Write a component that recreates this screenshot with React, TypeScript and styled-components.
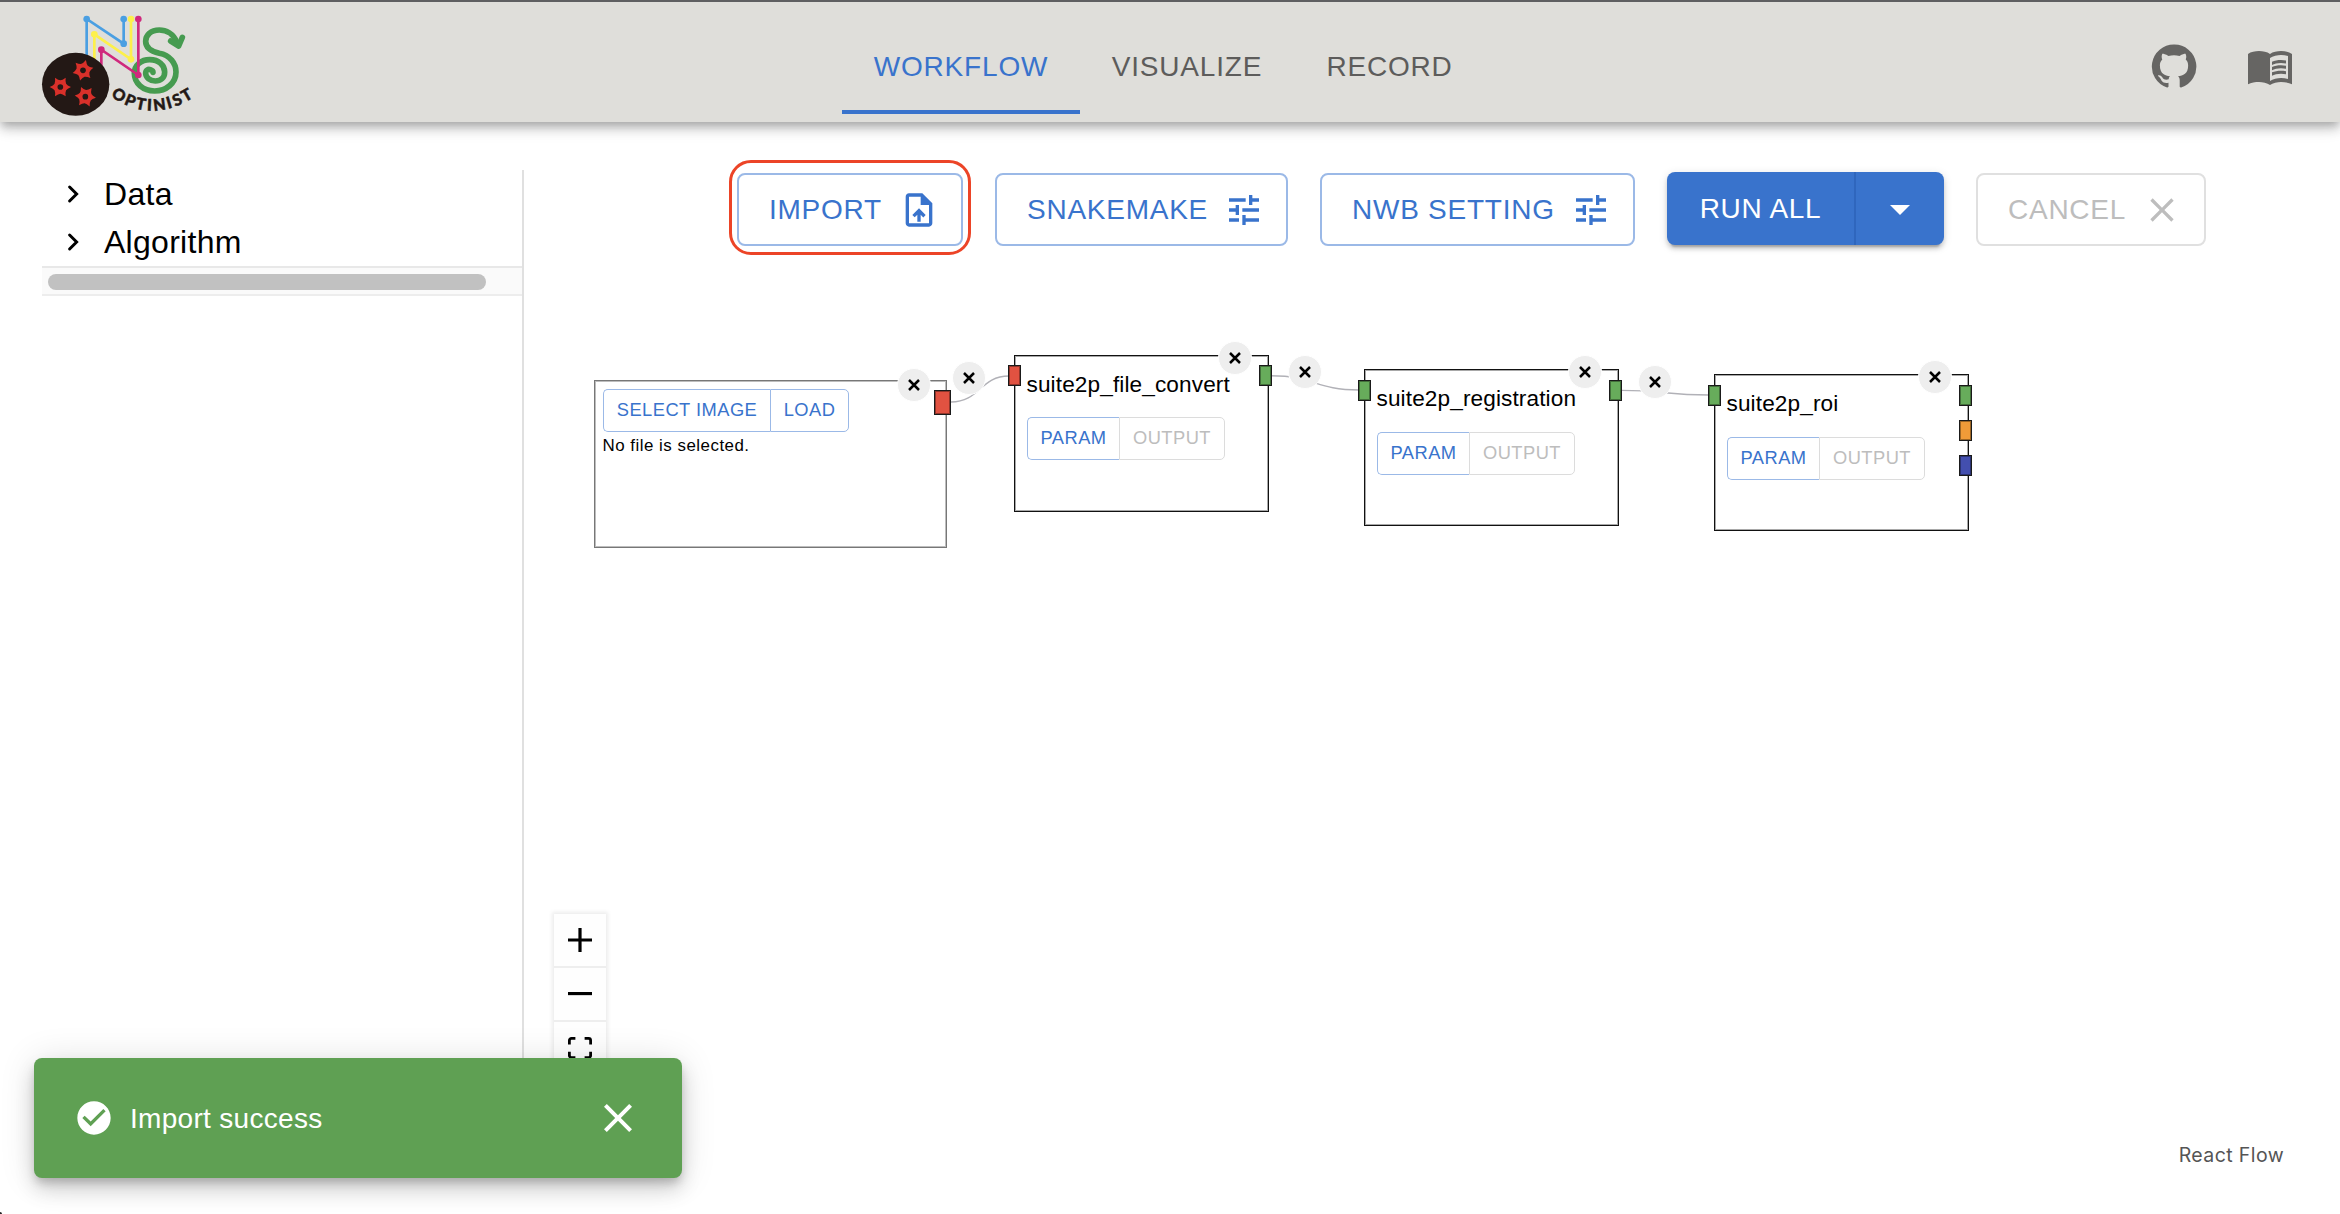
import React from "react";
import styled, { createGlobalStyle, css } from "styled-components";

const PRIMARY = "#3973cc";
const PRIMARY_BORDER = "#9bb9e7";
const DISABLED = "#bdbdbd";
const DISABLED_BORDER = "#e0e0e0";

const GlobalStyle = createGlobalStyle`
  * { box-sizing: border-box; }
  html, body { margin: 0; padding: 0; background: #fff; }
  body {
    font-family: "Liberation Sans", Arial, Helvetica, sans-serif;
    color: #000;
    overflow: hidden;
  }
  button { font-family: inherit; margin: 0; cursor: pointer; }
  svg { display: block; flex: none; }
`;

const Page = styled.div`
  position: relative;
  display: flex;
  flex-direction: column;
  width: 2340px;
  height: 1214px;
  overflow: hidden;
`;

/* ---------- Header ---------- */

const Header = styled.header`
  display: flex;
  align-items: flex-start;
  height: 122px;
  flex: none;
  padding: 0 46px 0 40px;
  background: #dfdeda;
  border-top: 2px solid #5f5f61;
  z-index: 1;
  box-shadow: 0 4px 8px -2px rgba(0, 0, 0, 0.2), 0 8px 10px rgba(0, 0, 0, 0.14),
    0 2px 20px rgba(0, 0, 0, 0.12);
`;

const LogoSvg = styled.svg`
  width: 160px;
  height: 104px;
  margin-top: 12px;
`;

const LogoText = styled.text`
  font-family: Lato, sans-serif;
  font-weight: 900;
  font-size: 48px;
  fill: #231815;
  stroke: #231815;
  stroke-width: 1.5;
`;

const Tabs = styled.nav`
  display: flex;
  margin: 16px 0 0 642px;
  height: 96px;
`;

const Tab = styled.button<{ $width: number; $active?: boolean }>`
  width: ${(p) => p.$width}px;
  padding: 2px 0 0;
  background: none;
  border: 0;
  font-size: 28px;
  letter-spacing: 0.8px;
  color: ${(p) => (p.$active ? PRIMARY : "#5d5c5b")};
  ${(p) => p.$active && css`
    box-shadow: inset 0 -4px 0 ${PRIMARY};
  `}
`;

const HeaderIcons = styled.div`
  display: flex;
  gap: 48px;
  margin: 40px 0 0 auto;
  color: #666563;
`;

/* ---------- Body ---------- */

const Body = styled.div`
  display: flex;
  flex: 1;
  padding: 48px 0 0 42px;
`;

const Sidebar = styled.aside`
  width: 482px;
  height: 1000px;
  flex: none;
  border-right: 2px solid #e0e0e0;
`;

const TreeRow = styled.div`
  display: flex;
  align-items: center;
  height: 48px;
  padding-left: 22px;
  gap: 22px;
  font-size: 32px;
  line-height: 48px;
  letter-spacing: 0.28px;
`;

const ScrollTrack = styled.div`
  height: 30px;
  padding: 6px;
  background: #fafafa;
  border-top: 2px solid #e8e8e8;
  border-bottom: 2px solid #ededed;
`;

const ScrollThumb = styled.div`
  width: 438px;
  height: 16px;
  border-radius: 8px;
  background: #c1c1c1;
`;

const Main = styled.main`
  display: flex;
  flex-direction: column;
  flex: 1;
`;

const Toolbar = styled.div`
  display: flex;
  align-items: flex-start;
  gap: 32px;
  height: 76px;
  padding: 3px 0 0 213px;
`;

const OutlinedButton = styled.button<{ $width: number; $disabled?: boolean }>`
  display: flex;
  align-items: center;
  justify-content: space-between;
  width: ${(p) => p.$width}px;
  height: 73px;
  padding: 0 22px 0 30px;
  background: #fff;
  border: 2px solid ${(p) => (p.$disabled ? DISABLED_BORDER : PRIMARY_BORDER)};
  border-radius: 8px;
  color: ${(p) => (p.$disabled ? DISABLED : PRIMARY)};
  font-size: 28px;
  line-height: 49px;
  letter-spacing: 0.75px;
  white-space: nowrap;
`;

const Highlight = styled.div`
  margin: -13px -8px 0 -8px;
  padding: 10px 5px 6px;
  border: 3px solid #ec4427;
  border-radius: 22px;
`;

const RunGroup = styled.div`
  display: flex;
  height: 73px;
  margin-top: -1px;
  border-radius: 8px;
  background: ${PRIMARY};
  box-shadow: 0 6px 2px -4px rgba(0, 0, 0, 0.2), 0 4px 4px rgba(0, 0, 0, 0.14),
    0 2px 10px rgba(0, 0, 0, 0.12);
`;

const RunButton = styled.button<{ $width: number; $divided?: boolean }>`
  display: flex;
  align-items: center;
  justify-content: center;
  width: ${(p) => p.$width}px;
  padding: 0;
  background: none;
  border: 0;
  border-right: ${(p) => (p.$divided ? "2px solid #2f66bd" : "0")};
  color: #fff;
  font-size: 28px;
  letter-spacing: 0.7px;
`;

/* ---------- Flow canvas ---------- */

const Canvas = styled.section`
  position: relative;
  flex: 1;
`;

const EdgeLayer = styled.svg`
  position: absolute;
  left: 0;
  top: 0;
  width: 1500px;
  height: 400px;
  fill: none;
  stroke: #b1b1b7;
  stroke-width: 1.4;
`;

const Node = styled.div<{ $x: number; $y: number; $kind: "data" | "algo" }>`
  position: absolute;
  left: ${(p) => p.$x}px;
  top: ${(p) => p.$y}px;
  background: #fff;
  ${(p) =>
    p.$kind === "data"
      ? css`
          width: 353px;
          height: 168px;
          padding: 8px 0 0 8px;
          border: 1px solid #777;
          box-shadow: inset 0 0 0 1px #bdbdbd;
        `
      : css`
          width: 255px;
          height: 157px;
          padding: 11px 0 0 12px;
          border: 1px solid #111;
          box-shadow: inset 0 0 0 1px #a8a8a8;
        `}
`;

const NodeTitle = styled.div<{ $gap: number }>`
  margin: 0 0 ${(p) => p.$gap}px -0.5px;
  font-size: 22.6px;
  line-height: 35px;
  letter-spacing: 0.12px;
  white-space: nowrap;
`;

const NodeNote = styled.div`
  margin: 2px 0 0 -0.5px;
  font-size: 16.9px;
  line-height: 24px;
  letter-spacing: 0.5px;
`;

const ButtonGroup = styled.div`
  display: flex;
  height: 43px;
`;

const GroupButton = styled.button<{ $width: number; $disabled?: boolean }>`
  width: ${(p) => p.$width}px;
  padding: 0 0 1px;
  background: #fff;
  border: 1px solid ${(p) => (p.$disabled ? "#dcdcdc" : PRIMARY_BORDER)};
  color: ${(p) => (p.$disabled ? DISABLED : PRIMARY)};
  font-size: 18.3px;
  letter-spacing: 0.48px;
  white-space: nowrap;
  &:first-child {
    border-right: 0;
    border-radius: 5px 0 0 5px;
  }
  &:last-child {
    border-radius: 0 5px 5px 0;
  }
`;

const RoundClose = styled.button<{ $cx: number; $cy: number }>`
  position: absolute;
  left: ${(p) => p.$cx - 17}px;
  top: ${(p) => p.$cy - 17}px;
  display: flex;
  align-items: center;
  justify-content: center;
  width: 34px;
  height: 34px;
  padding: 0;
  background: #eee;
  border: 1px solid #fff;
  border-radius: 50%;
`;

const Handle = styled.i<{ $x: number; $y: number; $color: string; $large?: boolean }>`
  position: absolute;
  left: ${(p) => p.$x}px;
  top: ${(p) => p.$y}px;
  width: ${(p) => (p.$large ? 17 : 13)}px;
  height: ${(p) => (p.$large ? 25 : 21.4)}px;
  background: ${(p) => p.$color};
  border: 1px solid #1a1a1a;
  box-shadow: inset 0 0 0 1px rgba(0, 0, 0, 0.35);
`;

const Controls = styled.div`
  position: absolute;
  left: 30px;
  top: 668px;
  width: 52px;
  box-shadow: 0 0 4px 2px rgba(0, 0, 0, 0.08);
`;

const ControlButton = styled.button`
  display: flex;
  align-items: center;
  justify-content: center;
  width: 52px;
  height: 54px;
  padding: 0;
  background: #fefefe;
  border: 0;
  border-bottom: 2px solid #eee;
`;

const Attribution = styled.div`
  position: absolute;
  right: 56px;
  bottom: 46px;
  font-family: Inter, sans-serif;
  font-size: 19.5px;
  line-height: 26px;
  letter-spacing: 0.4px;
  color: #555;
  white-space: nowrap;
`;

/* ---------- Toast ---------- */

const Toast = styled.div`
  position: absolute;
  left: 34px;
  top: 1058px;
  z-index: 3;
  display: flex;
  align-items: center;
  width: 648px;
  height: 120px;
  padding: 0 40px;
  border-radius: 8px;
  background: #5fa053;
  color: #fff;
  font-size: 28px;
  letter-spacing: 0.3px;
  box-shadow: 0 6px 10px -2px rgba(0, 0, 0, 0.2), 0 12px 20px rgba(0, 0, 0, 0.14),
    0 2px 36px rgba(0, 0, 0, 0.12);
`;

const ToastText = styled.span`
  flex: 1;
  padding: 2px 0 0 16px;
`;

const WindowCorner = styled.i`
  position: absolute;
  left: 0;
  bottom: 0;
  width: 2px;
  height: 2px;
  background: #222;
  border-top-right-radius: 2px;
`;

/* ---------- Icons ---------- */

const ICONS = {
  github:
    "M12 1.27a11 11 0 00-3.48 21.46c.55.09.73-.28.73-.55v-1.84c-3.03.64-3.67-1.46-3.67-1.46-.55-1.29-1.28-1.65-1.28-1.65-.92-.65.1-.65.1-.65 1.1 0 1.73 1.1 1.73 1.1.92 1.65 2.57 1.2 3.21.92a2 2 0 01.64-1.47c-2.47-.27-5.04-1.19-5.04-5.5 0-1.1.46-2.1 1.2-2.84a3.76 3.76 0 010-2.93s.91-.28 3.11 1.1c1.8-.49 3.7-.49 5.5 0 2.1-1.38 3.02-1.1 3.02-1.1a3.76 3.76 0 01.1 2.93c.83.74 1.2 1.74 1.2 2.94 0 4.21-2.57 5.13-5.04 5.4.45.37.82.92.82 2.02v3.03c0 .27.1.64.73.55A11 11 0 0012 1.27",
  book:
    "M1 6C2.45 4.9 4.55 4.5 6.5 4.5S10.55 4.9 12 6c1.45-1.1 3.55-1.5 5.5-1.5S21.55 4.9 23 6v15.1C21.5 20.3 19.3 20 17.5 20c-1.7 0-4.15.65-5.5 1.5C10.65 20.65 8.2 20 6.5 20 4.7 20 2.5 20.3 1 21.1zM21 18.5V7c-1.1-.35-2.3-.5-3.5-.5-1.7 0-4.15.65-5.5 1.5v11.5c1.35-.85 3.8-1.5 5.5-1.5 1.2 0 2.4.15 3.5.5zM17.5 10.5c.88 0 1.73.09 2.5.26V9.24c-.79-.15-1.64-.24-2.5-.24-1.7 0-3.24.29-4.5.83v1.66c1.13-.64 2.7-.99 4.5-.99zM13 12.49v1.66c1.13-.64 2.7-.99 4.5-.99.88 0 1.73.09 2.5.26V11.9c-.79-.15-1.64-.24-2.5-.24-1.7 0-3.24.3-4.5.83zM17.5 14.33c-1.7 0-3.24.29-4.5.83v1.66c1.13-.64 2.7-.99 4.5-.99.88 0 1.73.09 2.5.26v-1.52c-.79-.16-1.64-.24-2.5-.24z",
  upload:
    "M14 2H6c-1.1 0-1.99.9-1.99 2L4 20c0 1.1.89 2 1.99 2H18c1.1 0 2-.9 2-2V8l-6-6zm4 18H6V4h7v5h5v11zM8 15.01l1.41 1.41L11 14.84V19h2v-4.16l1.59 1.59L16 15.01 12.01 11 8 15.01z",
  tune:
    "M3 17v2h6v-2H3zM3 5v2h10V5H3zm10 16v-2h8v-2h-8v-2h-2v6h2zM7 9v2H3v2h4v2h2V9H7zm14 4v-2H11v2h10zm-6-4h2V7h4V5h-4V3h-2v6z",
  close:
    "M19 6.41 17.59 5 12 10.59 6.41 5 5 6.41 10.59 12 5 17.59 6.41 19 12 13.41 17.59 19 19 17.59 13.41 12z",
  caret: "M7 10l5 5 5-5z",
  check:
    "M12 2C6.48 2 2 6.48 2 12s4.48 10 10 10 10-4.48 10-10S17.52 2 12 2zm-2 15l-5-5 1.41-1.41L10 14.17l7.59-7.59L19 8l-9 9z",
};

const Icon = ({ name, size = 40 }: { name: keyof typeof ICONS; size?: number }) => (
  <svg width={size} height={size} viewBox="0 0 24 24" fill="currentColor" fillRule="evenodd">
    <path d={ICONS[name]} />
  </svg>
);

const Chevron = () => (
  <svg width="18" height="24" viewBox="0 0 18 24" fill="none" stroke="#000" strokeWidth="3" strokeLinecap="round">
    <path d="M5.6 5l7 7-7 7" />
  </svg>
);

const Cross = () => (
  <svg width="12" height="12" viewBox="0 0 12 12" stroke="#000" strokeWidth="2.5">
    <path d="M1 1l10 10M11 1L1 11" />
  </svg>
);

const starPath = (cx: number, cy: number, turn: number) => {
  const at = (r: number, deg: number) => {
    const a = (deg * Math.PI) / 180;
    return `${(cx + r * Math.cos(a)).toFixed(1)} ${(cy + r * Math.sin(a)).toFixed(1)}`;
  };
  let d = `M${at(32, turn)}`;
  for (let i = 0; i < 6; i++) {
    const a = turn + i * 60;
    d += ` Q${at(21, a + 14)} ${at(20, a + 30)} Q${at(21, a + 46)} ${at(32, a + 60)}`;
  }
  return d + "Z";
};

const STARS: [number, number, number][] = [
  [249, 211, -14],
  [181, 261, 0],
  [256, 290, 6],
];

const TRACES = [
  { color: "#4a9fe2", pts: [[260, 185], [260, 57], [371, 131], [371, 57]] },
  { color: "#fdf04b", pts: [[283, 195], [283, 103], [393, 178], [393, 57]] },
  { color: "#d0297d", pts: [[304, 205], [304, 149], [415, 225], [415, 57]] },
];

const Logo = () => (
  <LogoSvg viewBox="120 42 480 312">
    <g fill="none" stroke="#469b50" strokeWidth="17" strokeLinecap="round" strokeLinejoin="round">
      <path d="M530 126C520 101 498 90 478 90 452 90 437 106 437 124c0 21 18 31 41 36 32 6 50 30 50 56 0 34-30 57-64 57-35 0-61-23-61-53 0-25 21-41 46-41 28 0 45 17 45 37 0 18-12 27-28 27s-29-10-29-23c0-10 7-13 14-11 6 2 8 5 8 8" />
      <path d="M512 123l24 15 11-26" />
    </g>
    {TRACES.map((t) => (
      <g key={t.color} fill={t.color}>
        <polyline points={t.pts.map((p) => p.join(",")).join(" ")} fill="none" stroke={t.color} strokeWidth="8" />
        {t.pts.slice(1).map(([x, y]) => (
          <circle key={`${x}-${y}`} cx={x} cy={y} r="10" />
        ))}
      </g>
    ))}
    <ellipse cx="227" cy="253" rx="101" ry="94.5" fill="#231815" />
    {STARS.map(([x, y, turn]) => (
      <g key={x}>
        <path d={starPath(x, y, turn)} fill="#d9302a" />
        <circle cx={x} cy={y} r="8.5" fill="#231815" />
      </g>
    ))}
    <path id="wordmark-arc" d="M332 288Q456 378 591 285" fill="none" />
    <LogoText>
      <textPath href="#wordmark-arc" textLength="267">
        OPTINIST
      </textPath>
    </LogoText>
  </LogoSvg>
);

/* ---------- Data ---------- */

const GREEN = "#67ac5b";
const RED = "#e15241";
const ORANGE = "#f09b38";
const BLUE = "#434faf";

const ALGORITHMS = [
  { name: "suite2p_file_convert", x: 490, y: 109, gap: 15, input: RED, outputs: [GREEN] },
  { name: "suite2p_registration", x: 840, y: 123, gap: 16, input: GREEN, outputs: [GREEN] },
  { name: "suite2p_roi", x: 1190, y: 128, gap: 16, input: GREEN, outputs: [GREEN, ORANGE, BLUE] },
];

const EDGES = [
  { d: "M427 156C456 156 456 130 485 130", cx: 445, cy: 132.3 },
  { d: "M747 129.7C791 129.7 791 144 835 144", cx: 780.7, cy: 126 },
  { d: "M1097 144.4C1141 144.4 1141 149 1185 149", cx: 1131, cy: 136 },
];

const AlgorithmNode = ({ name, x, y, gap, input, outputs }: (typeof ALGORITHMS)[number]) => {
  const handleTop = gap - 6;
  return (
    <Node $x={x} $y={y} $kind="algo">
      <NodeTitle $gap={gap}>{name}</NodeTitle>
      <ButtonGroup>
        <GroupButton $width={92}>PARAM</GroupButton>
        <GroupButton $width={106} $disabled>
          OUTPUT
        </GroupButton>
      </ButtonGroup>
      <RoundClose $cx={219.5} $cy={2.3}>
        <Cross />
      </RoundClose>
      <Handle $x={-7} $y={handleTop} $color={input} />
      {outputs.map((color, i) => (
        <Handle key={color} $x={244} $y={handleTop + i * 34.8} $color={color} />
      ))}
    </Node>
  );
};

export default function App() {
  return (
    <Page>
      <GlobalStyle />
      <Header>
        <Logo />
        <Tabs>
          <Tab $width={238} $active>
            WORKFLOW
          </Tab>
          <Tab $width={214}>VISUALIZE</Tab>
          <Tab $width={191}>RECORD</Tab>
        </Tabs>
        <HeaderIcons>
          <Icon name="github" size={48} />
          <Icon name="book" size={48} />
        </HeaderIcons>
      </Header>

      <Body>
        <Sidebar>
          <TreeRow>
            <Chevron />
            Data
          </TreeRow>
          <TreeRow>
            <Chevron />
            Algorithm
          </TreeRow>
          <ScrollTrack>
            <ScrollThumb />
          </ScrollTrack>
        </Sidebar>

        <Main>
          <Toolbar>
            <Highlight>
              <OutlinedButton $width={226}>
                IMPORT <Icon name="upload" />
              </OutlinedButton>
            </Highlight>
            <OutlinedButton $width={293}>
              SNAKEMAKE <Icon name="tune" />
            </OutlinedButton>
            <OutlinedButton $width={315}>
              NWB SETTING <Icon name="tune" />
            </OutlinedButton>
            <RunGroup>
              <RunButton $width={189} $divided>
                RUN ALL
              </RunButton>
              <RunButton $width={88}>
                <Icon name="caret" size={48} />
              </RunButton>
            </RunGroup>
            <OutlinedButton $width={230} $disabled>
              CANCEL <Icon name="close" />
            </OutlinedButton>
          </Toolbar>

          <Canvas>
            <EdgeLayer>
              {EDGES.map((e) => (
                <path key={e.d} d={e.d} />
              ))}
            </EdgeLayer>
            {EDGES.map((e) => (
              <RoundClose key={e.d} $cx={e.cx} $cy={e.cy}>
                <Cross />
              </RoundClose>
            ))}
            <Node $x={70} $y={134} $kind="data">
              <ButtonGroup>
                <GroupButton $width={167}>SELECT IMAGE</GroupButton>
                <GroupButton $width={79}>LOAD</GroupButton>
              </ButtonGroup>
              <NodeNote>No file is selected.</NodeNote>
              <RoundClose $cx={319} $cy={4}>
                <Cross />
              </RoundClose>
              <Handle $x={339} $y={9} $color={RED} $large />
            </Node>
            {ALGORITHMS.map((a) => (
              <AlgorithmNode key={a.name} {...a} />
            ))}

            <Controls>
              <ControlButton>
                <svg width="24" height="24" viewBox="0 0 32 32">
                  <path d="M32 18.133H18.133V32h-4.266V18.133H0v-4.266h13.867V0h4.266v13.867H32z" />
                </svg>
              </ControlButton>
              <ControlButton>
                <svg width="24" height="3.75" viewBox="0 0 32 5">
                  <path d="M0 0h32v4.2H0z" />
                </svg>
              </ControlButton>
              <ControlButton>
                <svg width="24" height="22.5" viewBox="0 0 32 30">
                  <path d="M3.692 4.63c0-.53.4-.938.939-.938h5.215V0H4.708C2.13 0 0 2.054 0 4.63v5.216h3.692V4.631zM27.354 0h-5.2v3.692h5.17c.53 0 .984.4.984.939v5.215H32V4.631A4.624 4.624 0 0027.354 0zm.954 24.83c0 .532-.4.94-.939.94h-5.215v3.768h5.215c2.577 0 4.631-2.13 4.631-4.707v-5.139h-3.692v5.139zm-23.677.94c-.531 0-.939-.4-.939-.94v-5.138H0v5.139c0 2.577 2.13 4.707 4.708 4.707h5.138V25.77H4.631z" />
                </svg>
              </ControlButton>
            </Controls>
            <Attribution>React Flow</Attribution>
          </Canvas>
        </Main>
      </Body>

      <Toast>
        <Icon name="check" />
        <ToastText>Import success</ToastText>
        <Icon name="close" size={48} />
      </Toast>
      <WindowCorner />
    </Page>
  );
}
